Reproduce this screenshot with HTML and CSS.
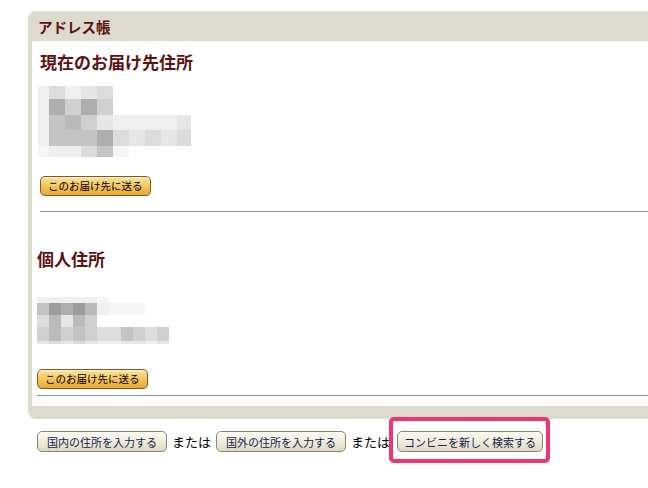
FILE: index.html
```html
<!DOCTYPE html>
<html lang="ja">
<head>
<meta charset="utf-8">
<title>アドレス帳</title>
<link rel="stylesheet" href="styles.css">
</head>
<body>
<div class="page">
  <div class="panel">
    <div class="panel-head"><h1 class="panel-title">アドレス帳</h1></div>
    <div class="panel-body">
      <section class="addr addr-current">
        <h2 class="addr-title">現在のお届け先住所</h2>
        <div class="mosaic mosaic-a">
          <span class="c2"></span><span class="c4"></span><span class="c2"></span><span class="c3"></span><span class="c4"></span><span class="c0"></span><span class="c0"></span><span class="c0"></span><span class="c0"></span><span class="c0"></span>
          <span class="c2"></span><span class="c8"></span><span class="c5"></span><span class="c8"></span><span class="c5"></span><span class="c0"></span><span class="c0"></span><span class="c0"></span><span class="c0"></span><span class="c0"></span>
          <span class="c2"></span><span class="c6"></span><span class="c7"></span><span class="c5"></span><span class="c3"></span><span class="c2"></span><span class="c2"></span><span class="c2"></span><span class="c2"></span><span class="c3"></span>
          <span class="c2"></span><span class="c6"></span><span class="c6"></span><span class="c6"></span><span class="c8"></span><span class="c4"></span><span class="c3"></span><span class="c4"></span><span class="c3"></span><span class="c4"></span>
          <span class="c1"></span><span class="c2"></span><span class="c2"></span><span class="c4"></span><span class="c6"></span><span class="c1"></span><span class="c0"></span><span class="c0"></span><span class="c0"></span><span class="c0"></span>
        </div>
        <button class="btn-ship" type="button">このお届け先に送る</button>
        <hr class="rule">
      </section>
      <section class="addr addr-personal">
        <h2 class="addr-title">個人住所</h2>
        <div class="mosaic mosaic-b">
          <span class="c2"></span><span class="c2"></span><span class="c2"></span><span class="c2"></span><span class="c2"></span><span class="c1"></span><span class="c0"></span><span class="c0"></span><span class="c0"></span><span class="c0"></span><span class="c0"></span>
          <span class="c6"></span><span class="c9"></span><span class="c8"></span><span class="c9"></span><span class="c7"></span><span class="c2"></span><span class="c1"></span><span class="c1"></span><span class="c1"></span><span class="c0"></span><span class="c0"></span>
          <span class="c4"></span><span class="c7"></span><span class="c3"></span><span class="c7"></span><span class="c5"></span><span class="c0"></span><span class="c0"></span><span class="c0"></span><span class="c0"></span><span class="c0"></span><span class="c0"></span>
          <span class="c5"></span><span class="c7"></span><span class="c5"></span><span class="c6"></span><span class="c5"></span><span class="c4"></span><span class="c4"></span><span class="c6"></span><span class="c5"></span><span class="c4"></span><span class="c5"></span>
          <span class="c3"></span><span class="c4"></span><span class="c3"></span><span class="c4"></span><span class="c3"></span><span class="c2"></span><span class="c2"></span><span class="c3"></span><span class="c3"></span><span class="c2"></span><span class="c3"></span>
        </div>
        <button class="btn-ship" type="button">このお届け先に送る</button>
        <hr class="rule">
      </section>
    </div>
  </div>
  <div class="actions">
    <button class="btn-plain" type="button">国内の住所を入力する</button>
    <span class="or">または</span>
    <button class="btn-plain" type="button">国外の住所を入力する</button>
    <span class="or">または</span>
    <span class="highlight"><button class="btn-plain btn-narrow" type="button">コンビニを新しく検索する</button></span>
  </div>
</div>
</body>
</html>
```

FILE: styles.css
```css
* { box-sizing: border-box; }
html, body { margin: 0; padding: 0; background: #fff; }
body {
  font-family: "Noto Sans CJK JP", "Noto Sans", sans-serif;
  overflow: hidden;
  width: 648px;
  height: 488px;
}
.page {
  padding: 11px 0 0 28px;
}
.panel {
  background: #dddbcf;
  border-radius: 8px 0 0 8px;
  padding: 0 0 13px 4px;
}
.panel-head {
  height: 30px;
  display: flex;
  align-items: center;
  padding-left: 6px;
  border-top: 1px solid #e8e6dc;
}
.panel-title {
  margin: 0;
  font-size: 14.5px;
  line-height: 20px;
  font-weight: bold;
  color: #5e1212;
}
.panel-body {
  background: #fff;
  padding: 10px 0 10px 0;
}
.addr {
  display: flex;
  flex-direction: column;
  align-items: flex-start;
}
.addr-current { padding-left: 8px; }
.addr-personal { padding-left: 5px; padding-top: 36px; }
.addr-title {
  margin: 0;
  font-size: 17px;
  line-height: 22px;
  font-weight: bold;
  color: #5e1212;
}
.mosaic { display: grid; }
.mosaic-a {
  margin: 13px 0 0 -2px;
  grid-template-columns: 11px 16px 16px 16px 16px 16px 16px 16px 16px 14px;
  grid-template-rows: 13px 16px 15px 16px 11px;
}
.mosaic-b {
  margin-top: 27px;
  grid-template-columns: repeat(11, 12px);
  grid-template-rows: 6px 12px 12px 14px 3px;
}
.c0 { background: #ffffff; }
.c1 { background: #f6f6f6; }
.c2 { background: #efefef; }
.c3 { background: #e6e6e6; }
.c4 { background: #dcdcdc; }
.c5 { background: #d0d0d0; }
.c6 { background: #c4c4c4; }
.c7 { background: #bababa; }
.c8 { background: #aeaeae; }
.c9 { background: #9c9c9c; }
.btn-ship {
  font-family: inherit;
  font-size: 10.5px;
  line-height: 18px;
  height: 20px;
  padding: 0 7px;
  color: #000;
  border: 1px solid #7a5a1e;
  border-radius: 5px;
  background: linear-gradient(#fbe4a2, #f3c65c 50%, #e6a932);
  box-shadow: inset 0 1px 0 rgba(255,255,255,0.6);
  white-space: nowrap;
}
.addr-current .btn-ship { margin-top: 19px; }
.addr-personal .btn-ship { margin-top: 25px; }
.rule {
  align-self: stretch;
  margin: 15px 0 0 0;
  border: 0;
  height: 1px;
  background: #8e8e8e;
}
.addr-personal .rule { margin-top: 6px; }
.actions {
  display: flex;
  align-items: center;
  gap: 5px;
  margin: 12px 0 0 9px;
}
.or {
  font-size: 13px;
  line-height: 20px;
  color: #000;
}
.btn-plain {
  font-family: inherit;
  font-size: 11px;
  line-height: 18px;
  height: 21px;
  padding: 0 9px;
  color: #16224d;
  border: 1px solid #8a8672;
  border-radius: 5px;
  background: linear-gradient(#fbfaf2, #eeebdc 55%, #dcd8c3);
  white-space: nowrap;
}
.btn-narrow { padding: 0 6px; }
.highlight {
  position: relative;
  display: inline-flex;
  margin-left: 2px;
}
.highlight::after {
  content: "";
  position: absolute;
  left: -8px;
  right: -7px;
  top: -14px;
  bottom: -11px;
  border: 4px solid #f3356f;
  border-radius: 5px;
  pointer-events: none;
}
```
